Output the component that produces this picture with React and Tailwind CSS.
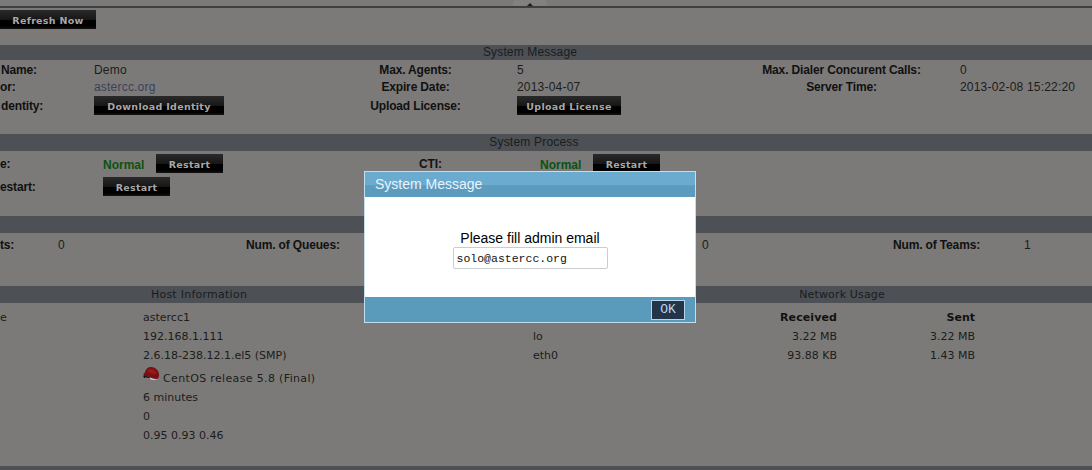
import React from "react";

const arial = "font-['Liberation_Sans',Arial,sans-serif]";
const verdana = "font-['DejaVu_Sans',Verdana,sans-serif]";

function Btn({ children, className = "" }) {
  return (
    <div
      className={`flex h-[19px] items-center justify-center bg-[linear-gradient(#2a2a2a_0%,#171717_50%,#000_55%,#000_85%,#141414_100%)] pt-[4px] font-['DejaVu_Sans',Verdana,sans-serif] text-[9.5px] font-bold tracking-[0.3px] text-[#a8a8a8] ${className}`}
    >
      {children}
    </div>
  );
}

function Bar({ children, className = "" }) {
  return (
    <div className={`h-[17px] bg-[#4d5055] text-center leading-[17px] text-[#1b1c1e] ${className}`}>
      {children}
    </div>
  );
}

function Label({ children, className = "" }) {
  return <div className={`font-bold tracking-[-0.15px] text-[#111] ${className}`}>{children}</div>;
}

function RedHat() {
  return (
    <svg width="17" height="16" viewBox="0 0 17 16" className="absolute left-0 top-[1px]">
      <path d="M0.5 11 C1 12.5 4 11 5 12 C8 14 12 15 15 13 C12 13.5 9 12.5 7 11 Z" fill="#c9c9c9" />
      <path d="M1 10.5 C0 9 0.5 7 2 6.5 C2.5 3 5 1 8.5 1 C12 1 15.5 4 16 8 C16.5 11 15 13 13 13 C10 12.5 7 11.5 5 10.5 C3.5 10 2 10 1 10.5 Z" fill="#7a1014" />
      <path d="M5 3.5 C8 2 12 3.5 14 7.5 C11 8.5 7 7.5 5 5.5 Z" fill="#9a181c" />
      <path d="M0.5 10 C0 12 1.5 12.5 3 11.5 L7 12.5 L7 11.5 C4 10 2 9.5 0.5 10 Z" fill="#141414" />
    </svg>
  );
}

const hostValues = ["astercc1", "192.168.1.111", "2.6.18-238.12.1.el5 (SMP)"];

export default function App() {
  return (
    <div className={`relative h-[470px] w-[1092px] overflow-hidden bg-[#7b7a78] text-[12px] text-[#1c1c1c] ${arial}`}>
      {/* top rule and collapse handle */}
      <div className="relative h-[8px] border-b-2 border-[#3e3f41]">
        <div className="absolute left-[513px] top-0 flex h-[6px] w-[34px] items-end justify-center rounded-t-[4px] bg-[#82817f]">
          <div className="h-0 w-0 border-x-[3px] border-b-[3px] border-x-transparent border-b-[#1e1e1e]" />
        </div>
      </div>

      {/* refresh */}
      <div className="h-[37px] pt-[2px]">
        <Btn className="w-[96px]">Refresh Now</Btn>
      </div>

      {/* System Message */}
      <Bar className="!h-[15px] !leading-[15px]">
        <span className="relative left-[-16px] tracking-[0.15px]">System Message</span>
      </Bar>
      <div className="h-[74px] pt-[1px] tracking-[0.2px]">
        <div className="grid h-[17px] grid-cols-[94px_276px_147px_245px_198px_1fr] items-center">
          <Label className="pl-[1px]">Name:</Label>
          <div>Demo</div>
          <Label className="pr-[56px] text-center">Max. Agents:</Label>
          <div>5</div>
          <Label className="whitespace-nowrap pr-[39px] text-center">Max. Dialer Concurent Calls:</Label>
          <div>0</div>
        </div>
        <div className="grid h-[17px] grid-cols-[94px_276px_147px_245px_198px_1fr] items-center">
          <Label>or:</Label>
          <div className="text-[#3b4159]">astercc.org</div>
          <Label className="pr-[56px] text-center">Expire Date:</Label>
          <div>2013-04-07</div>
          <Label className="pr-[39px] text-center">Server Time:</Label>
          <div className="whitespace-nowrap">2013-02-08 15:22:20</div>
        </div>
        <div className="mt-[1px] grid h-[19px] grid-cols-[94px_276px_147px_245px_198px_1fr] items-center">
          <Label className="pl-[1px]">dentity:</Label>
          <Btn className="w-[130px]">Download Identity</Btn>
          <Label className="whitespace-nowrap pr-[56px] text-center">Upload License:</Label>
          <Btn className="w-[104px]">Upload License</Btn>
        </div>
      </div>

      {/* System Process */}
      <Bar>
        <span className="relative left-[-12px] tracking-[0.2px]">System Process</span>
      </Bar>
      <div className="h-[65px] pt-[3px]">
        <div className="grid h-[19px] grid-cols-[103px_316px_121px_1fr] items-center">
          <Label>e:</Label>
          <div className="flex items-center gap-[12px]">
            <span className="relative top-[1px] w-[41px] font-bold text-[#0b5212]">Normal</span>
            <Btn className="w-[67px]">Restart</Btn>
          </div>
          <Label>CTI:</Label>
          <div className="flex items-center gap-[12px]">
            <span className="relative top-[1px] w-[41px] font-bold text-[#0b5212]">Normal</span>
            <Btn className="w-[67px]">Restart</Btn>
          </div>
        </div>
        <div className="mt-[4px] grid h-[19px] grid-cols-[103px_1fr] items-center">
          <Label>estart:</Label>
          <Btn className="w-[67px]">Restart</Btn>
        </div>
      </div>

      {/* Counters */}
      <Bar />
      <div className="h-[53px] pt-[3px]">
        <div className="grid h-[17px] grid-cols-[58px_188px_456px_191px_131px_1fr] items-center">
          <Label>ts:</Label>
          <div>0</div>
          <Label>Num. of Queues:</Label>
          <div>0</div>
          <Label>Num. of Teams:</Label>
          <div>1</div>
        </div>
      </div>

      {/* Host / Network */}
      <Bar className={`grid grid-cols-[398px_194px_1fr] text-[11px] ${verdana}`}>
        <div className="tracking-[0.25px]">Host Information</div>
        <div />
        <div className="tracking-[0.15px]">Network Usage</div>
      </Bar>
      <div className={`grid h-[163px] grid-cols-[533px_1fr] pt-[5px] text-[11px] leading-[19px] ${verdana}`}>
        <div className="grid grid-cols-[143px_1fr] content-start">
          <div>e</div>
          <div>{hostValues[0]}</div>
          <div />
          <div>{hostValues[1]}</div>
          <div />
          <div>{hostValues[2]}</div>
          <div />
          <div className="relative h-[23px] pl-[20px] pt-[4px] tracking-[0.35px]">
            <RedHat />
            CentOS release 5.8 (Final)
          </div>
          <div />
          <div>6 minutes</div>
          <div />
          <div>0</div>
          <div />
          <div>0.95 0.93 0.46</div>
        </div>
        <div className="grid grid-cols-[140px_164px_138px] content-start">
          <div />
          <div className="text-right font-bold tracking-[0.1px] text-[#111]">Received</div>
          <div className="text-right font-bold text-[#111]">Sent</div>
          <div>lo</div>
          <div className="text-right">3.22 MB</div>
          <div className="text-right">3.22 MB</div>
          <div>eth0</div>
          <div className="text-right">93.88 KB</div>
          <div className="text-right">1.43 MB</div>
        </div>
      </div>
      <div className="h-[4px] bg-[#4d5055]" />

      {/* Dialog */}
      <div className="absolute left-[364px] top-[171px] flex h-[152px] w-[332px] flex-col border border-[#c3deee] bg-white">
        <div className="h-[25px] bg-[linear-gradient(#6aabcf_0%,#6aabcf_50%,#5c9bbe_55%,#5c9bbe_100%)] pl-[10px] text-[14px] leading-[25px] text-[#e6f3fb]">
          System Message
        </div>
        <div className="flex flex-1 flex-col items-center pt-[33px]">
          <div className="text-[14px] leading-[17px] text-black">Please fill admin email</div>
          <div className="h-[22px] w-[155px] rounded-[2px] border border-[#c9cdd1] pl-[3px] font-['Liberation_Mono',monospace] text-[11.5px] leading-[22px] text-[#111]">
            solo@astercc.org
          </div>
        </div>
        <div className="flex h-[25px] items-center justify-end bg-[#5a9aba] pr-[10px]">
          <div className="flex h-[20px] w-[34px] items-center justify-center border border-[#b7d6ee] bg-[#24354a] font-['Liberation_Mono',monospace] text-[13px] text-[#bfd2ea]">
            OK
          </div>
        </div>
      </div>
    </div>
  );
}
